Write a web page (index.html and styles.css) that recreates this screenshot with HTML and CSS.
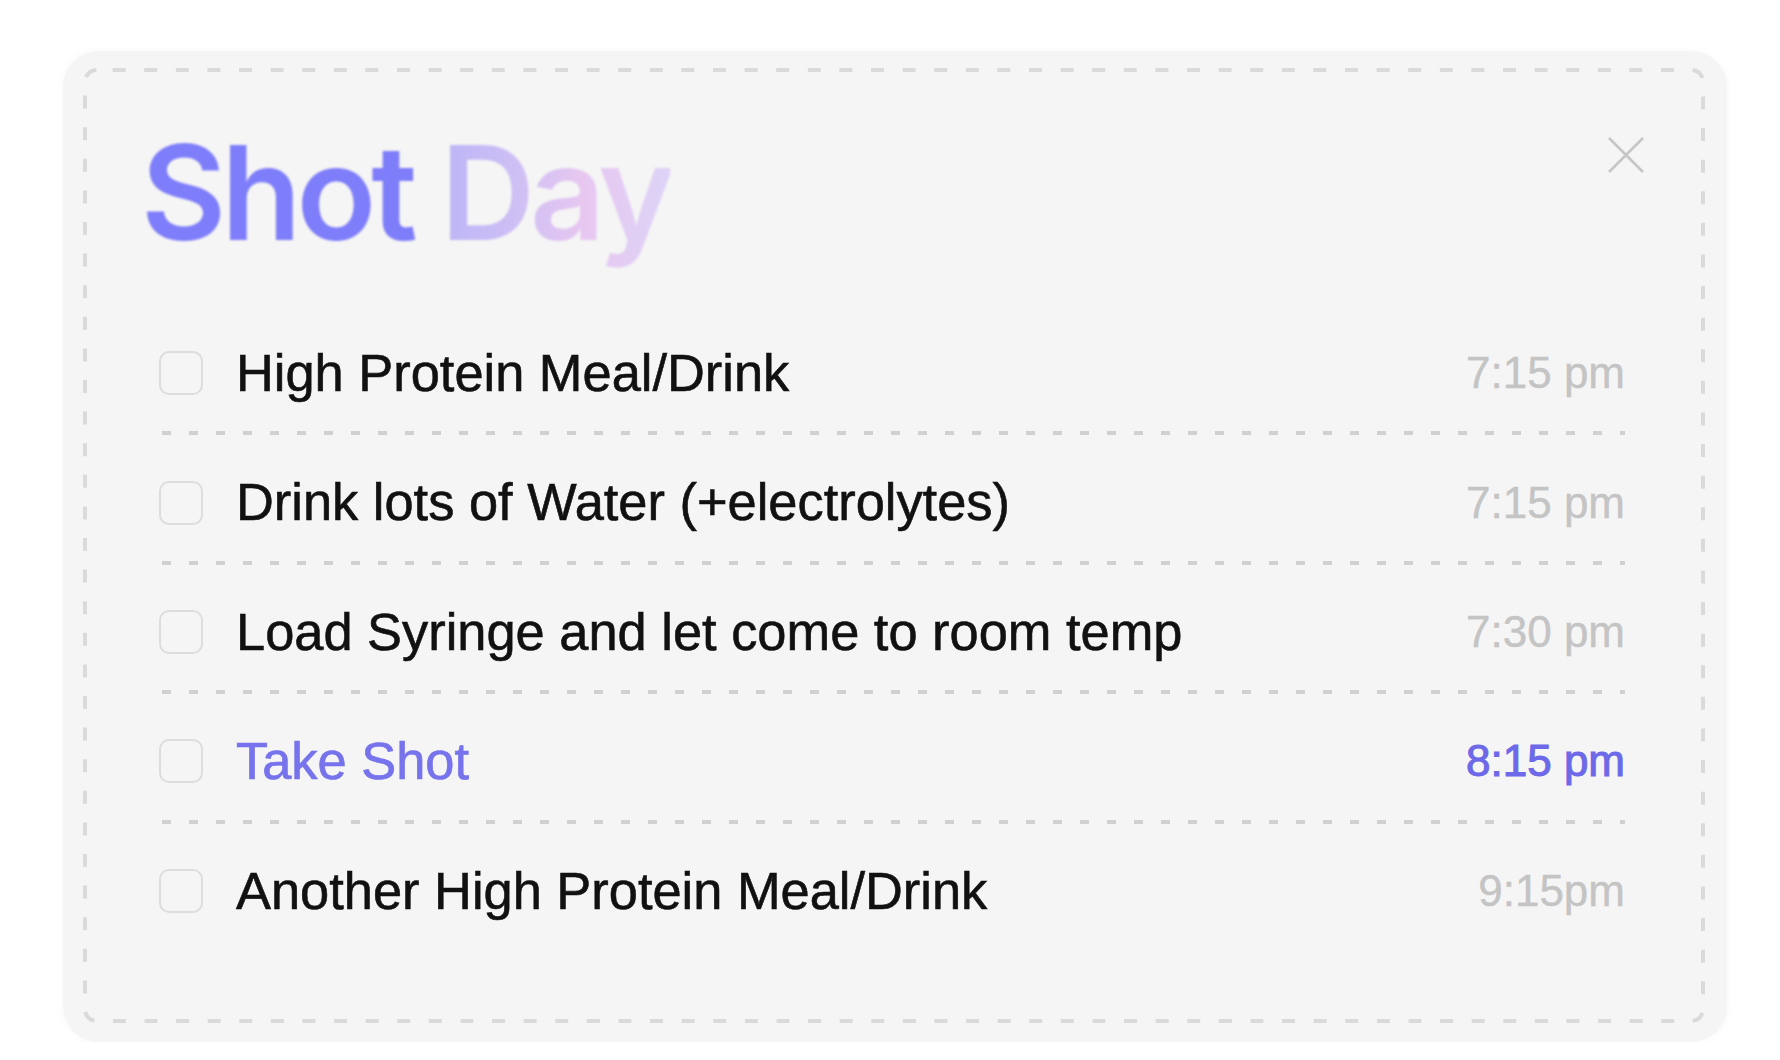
FILE: index.html
```html
<!DOCTYPE html>
<html lang="en">
<head>
<meta charset="utf-8">
<title>Shot Day</title>
<link rel="stylesheet" href="styles.css">
</head>
<body>
<div class="card">
  <div class="frame">
    <svg class="frame-dash" aria-hidden="true"><rect x="0" y="0" width="100%" height="100%" rx="12" ry="12"/></svg>
    <header class="head">
      <h1 class="title"><span class="title-a">Shot</span> <span class="title-b">Day</span></h1>
      <button class="close" type="button" aria-label="Close">
        <svg viewBox="0 0 36 36" width="36" height="36"><path d="M1 1 L35 35 M35 1 L1 35"/></svg>
      </button>
    </header>
    <ul class="tasks">
      <li class="task"><span class="box"></span><span class="label">High Protein Meal/Drink</span><span class="time">7:15 pm</span></li>
      <li class="task"><span class="box"></span><span class="label">Drink lots of Water (+electrolytes)</span><span class="time">7:15 pm</span></li>
      <li class="task"><span class="box"></span><span class="label">Load Syringe and let come to room temp</span><span class="time">7:30 pm</span></li>
      <li class="task task-now"><span class="box"></span><span class="label">Take Shot</span><span class="time">8:15 pm</span></li>
      <li class="task"><span class="box"></span><span class="label">Another High Protein Meal/Drink</span><span class="time">9:15pm</span></li>
    </ul>
  </div>
</div>
</body>
</html>
```

FILE: styles.css
```css
* { box-sizing: border-box; }

html, body {
  margin: 0;
  padding: 0;
  background: #ffffff;
}

body {
  font-family: "Liberation Sans", Arial, sans-serif;
  color: #111111;
}

.card {
  margin: 51px 0 0 63px;
  width: 1664px;
  height: 991px;
  padding: 19px 24px 21px 22px;
  background: #f5f5f5;
  border-radius: 36px;
  box-shadow: 0 0 8px rgba(0, 0, 0, 0.035);
}

.frame {
  position: relative;
  width: 100%;
  height: 100%;
}

.frame-dash {
  position: absolute;
  left: 0;
  top: 0;
  width: 100%;
  height: 100%;
  overflow: visible;
  pointer-events: none;
}

.frame-dash rect {
  fill: none;
  stroke: #dadada;
  stroke-width: 4;
  stroke-dasharray: 13 18.6;
  stroke-dashoffset: 16;
}

.head {
  display: flex;
  justify-content: space-between;
  align-items: flex-start;
  padding: 57px 59px 0 56px;
}

.title {
  margin: 0;
  font-family: Inter, "Liberation Sans", sans-serif;
  font-weight: 600;
  font-size: 131px;
  line-height: 1;
  letter-spacing: -5px;
  white-space: nowrap;
  filter: blur(0.9px);
}

.title-a {
  color: #7e7dfa;
}

.title-b {
  background: linear-gradient(90deg, #bcb5f7 0%, #cfc0f4 35%, #e7c7f0 62%, #ddd3f7 100%);
  -webkit-background-clip: text;
  background-clip: text;
  color: transparent;
}

.close {
  margin-top: 10px;
  width: 36px;
  height: 36px;
  padding: 0;
  border: 0;
  background: none;
  cursor: pointer;
}

.close svg {
  display: block;
}

.close path {
  stroke: #c6c6c6;
  stroke-width: 2.6;
  fill: none;
}

.tasks {
  list-style: none;
  margin: 48px 0 0;
  padding: 0 78px 0 74px;
}

.task {
  display: flex;
  align-items: center;
  gap: 33px;
  padding: 41px 0 36px;
  background-image: linear-gradient(90deg, #d0d0d0 0 9px, transparent 9px 27px);
  background-size: 27px 4px;
  background-repeat: repeat-x;
  background-position: 3px bottom;
}

.task:last-child {
  background: none;
}

.box {
  flex: none;
  width: 44px;
  height: 44px;
  border: 2.5px solid #dddddd;
  border-radius: 10px;
}

.label {
  flex: 1;
  font-size: 52.4px;
  line-height: 1;
  color: #111111;
  -webkit-text-stroke: 0.6px #111111;
  white-space: nowrap;
}

.time {
  flex: none;
  font-size: 44px;
  line-height: 1;
  color: #c4c4c4;
  -webkit-text-stroke: 0.4px #c4c4c4;
}

.task-now .label {
  color: #7673ec;
  -webkit-text-stroke: 0.7px #7673ec;
}

.task-now .time {
  color: #6d69e8;
  -webkit-text-stroke: 1.1px #6d69e8;
}
```
